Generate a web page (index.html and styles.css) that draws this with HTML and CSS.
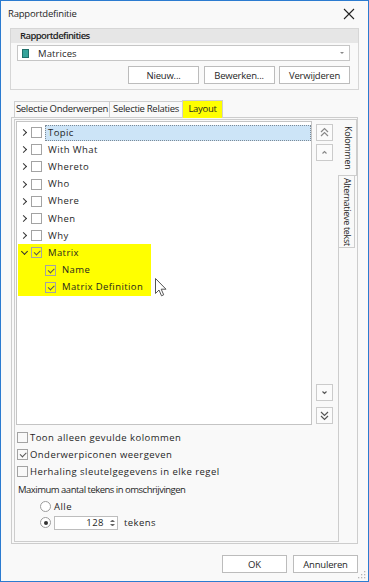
FILE: index.html
```html
<!DOCTYPE html>
<html lang="nl">
<head>
  <meta charset="UTF-8">
  <title>Rapportdefinitie</title>
  <link rel="stylesheet" href="styles.css">
</head>
<body>
  <div class="window">
    <!-- titelbalk -->
    <div class="titlebar">
      <span class="title">Rapportdefinitie</span>
      <svg class="close" width="12" height="12" viewBox="0 0 12 12">
        <path d="M1 1 L11 11 M11 1 L1 11" stroke="#222" stroke-width="1.1" fill="none"/>
      </svg>
    </div>

    <!-- rapportdefinities groep -->
    <div class="group">
      <div class="group-head">Rapportdefinities</div>
      <div class="group-body">
        <div class="combo">
          <span class="combo-icon"></span>
          <span class="combo-text">Matrices</span>
          <span class="combo-arrow"></span>
        </div>
        <div class="group-buttons">
          <button class="btn">Nieuw...</button>
          <button class="btn">Bewerken...</button>
          <button class="btn">Verwijderen</button>
        </div>
      </div>
    </div>

    <!-- tabbladen -->
    <div class="tabs">
      <div class="tab tab-1">Selectie Onderwerpen</div>
      <div class="tab tab-2">Selectie Relaties</div>
      <div class="tab tab-3 active">Layout</div>
    </div>

    <div class="page">
      <div class="pane">
        <div class="pane-top">
          <div class="tree">
            <div class="row sel"><span class="chev"></span><span class="cb"></span><span class="label">Topic</span></div>
            <div class="row"><span class="chev"></span><span class="cb"></span><span class="label">With What</span></div>
            <div class="row"><span class="chev"></span><span class="cb"></span><span class="label">Whereto</span></div>
            <div class="row"><span class="chev"></span><span class="cb"></span><span class="label">Who</span></div>
            <div class="row"><span class="chev"></span><span class="cb"></span><span class="label">Where</span></div>
            <div class="row"><span class="chev"></span><span class="cb"></span><span class="label">When</span></div>
            <div class="row"><span class="chev"></span><span class="cb"></span><span class="label">Why</span></div>
            <div class="hl">
              <div class="row"><span class="chev open"></span><span class="cb on"></span><span class="label">Matrix</span></div>
              <div class="row child"><span class="cb on"></span><span class="label">Name</span></div>
              <div class="row child"><span class="cb on"></span><span class="label">Matrix Definition</span></div>
            </div>
          </div>
          <div class="movers">
            <div class="mbtn">
              <svg width="11" height="11" viewBox="0 0 11 11"><path d="M2 5 L5.5 1.5 L9 5 M2 9 L5.5 5.5 L9 9" stroke="#888" stroke-width="1.2" fill="none"/></svg>
            </div>
            <div class="mbtn up">
              <svg width="11" height="11" viewBox="0 0 11 11"><path d="M3.5 6.5 L5.5 4.5 L7.5 6.5" stroke="#888" stroke-width="1.1" fill="none"/></svg>
            </div>
            <div class="spacer"></div>
            <div class="mbtn">
              <svg width="11" height="11" viewBox="0 0 11 11"><path d="M3.5 4.5 L5.5 6.5 L7.5 4.5" stroke="#555" stroke-width="1.1" fill="none"/></svg>
            </div>
            <div class="mbtn down">
              <svg width="11" height="11" viewBox="0 0 11 11"><path d="M2 2 L5.5 5.5 L9 2 M2 6 L5.5 9.5 L9 6" stroke="#555" stroke-width="1.2" fill="none"/></svg>
            </div>
          </div>
        </div>

        <!-- opties -->
        <div class="options">
          <div class="opt"><span class="cb"></span>Toon alleen gevulde kolommen</div>
          <div class="opt"><span class="cb on"></span>Onderwerpiconen weergeven</div>
          <div class="opt"><span class="cb"></span>Herhaling sleutelgegevens in elke regel</div>
          <div class="opt caption">Maximum aantal tekens in omschrijvingen</div>
          <div class="opt radio-row"><span class="radio"></span>Alle</div>
          <div class="opt radio-row second">
            <span class="radio on"></span>
            <span class="spin">128<span class="spin-arrows"><i class="up"></i><i class="down"></i></span></span>
            <span class="unit">tekens</span>
          </div>
        </div>
      </div>

      <div class="vtabs">
        <div class="vtab active">Kolommen</div>
        <div class="vtab">Alternatieve tekst</div>
      </div>
    </div>

    <div class="footer">
      <button class="btn">OK</button>
      <button class="btn">Annuleren</button>
    </div>

    <!-- muiscursor en sleepgreep -->
    <svg class="cursor" width="12" height="19" viewBox="0 0 12 19">
      <path d="M0.5 0.5 L0.5 15.5 L4 12 L6.5 17.8 L8.7 16.8 L6.2 11.2 L11 11.2 Z" fill="#fff" stroke="#555" stroke-width="1"/>
    </svg>
    <svg class="grip" width="8" height="8" viewBox="0 0 8 8">
      <g fill="#b5b5b5">
        <rect x="6" y="0" width="1.3" height="1.3"/>
        <rect x="3" y="3" width="1.3" height="1.3"/><rect x="6" y="3" width="1.3" height="1.3"/>
        <rect x="0" y="6" width="1.3" height="1.3"/><rect x="3" y="6" width="1.3" height="1.3"/><rect x="6" y="6" width="1.3" height="1.3"/>
      </g>
    </svg>
  </div>
</body>
</html>
```

FILE: styles.css
```css
/* basis */
* { box-sizing: border-box; margin: 0; padding: 0; }
body {
  font-family: 'Open Sans', 'Noto Sans', sans-serif;
  font-size: 9.5px;
  letter-spacing: -0.2px;
  color: #1f1f1f;
  background: #fff;
  white-space: nowrap;
}
.window {
  position: relative;
  width: 369px;
  height: 582px;
  border: 1px solid #2b7bd0;
  background: #f9f9f9;
  display: flex;
  flex-direction: column;
}
.titlebar {
  height: 27px;
  display: flex;
  align-items: center;
  justify-content: space-between;
  padding: 0 13px 2px 7px;
}

/* groep */
.group {
  margin: 0 9px;
  border: 1px solid #d6d6d6;
}
.group-head {
  height: 14px;
  line-height: 14px;
  padding-left: 9px;
  background: #e6e6e6;
  font-weight: 600;
  letter-spacing: -0.6px;
}
.group-body { padding: 2px 8px 5px 6px; }
.combo {
  height: 16px;
  border: 1px solid #c6c6c6;
  background: #fff;
  display: flex;
  align-items: center;
  padding: 0 5px 0 4px;
  letter-spacing: 0.1px;
}
.combo-icon {
  width: 7px;
  height: 9px;
  background: #35a39a;
  border: 1px solid #1f6f69;
  margin-right: 9px;
}
.combo-text { flex: 1; }
.combo-arrow {
  border-left: 2.5px solid transparent;
  border-right: 2.5px solid transparent;
  border-top: 2.5px solid #888;
}
.group-buttons {
  display: flex;
  justify-content: flex-end;
  gap: 4.5px;
  margin-top: 5px;
}
.btn {
  width: 71px;
  height: 18px;
  border: 1px solid #bcbcbc;
  background: #fff;
  font: inherit;
  color: inherit;
  letter-spacing: inherit;
}

/* tabbladen */
.tabs {
  display: flex;
  align-items: flex-start;
  height: 18px;
  margin: 10px 0 0 13px;
  position: relative;
  z-index: 1;
  letter-spacing: -0.3px;
}
.tab {
  height: 16px;
  margin-top: 1px;
  line-height: 14px;
  text-align: center;
  border: 1px solid #cfcfcf;
  border-bottom: none;
  background: #f9f9f9;
}
.tab + .tab { margin-left: -1px; }
.tab-1 { width: 96px; }
.tab-2 { width: 74px; }
.tab-3 { width: 41px; }
.tab.active {
  height: 18px;
  margin-top: 0;
  line-height: 16px;
  background: #ffff00;
}
.page {
  display: flex;
  height: 427px;
  margin: -1px 10px 0 10px;
  padding: 1px 0 0 2px;
  border: 1px solid #cdcdcd;
}
.pane {
  width: 325px;
  height: 423px;
  border: 1px solid #cdcdcd;
  padding: 1px 4px 0 1px;
}
.pane-top { display: flex; gap: 4px; }

/* boom */
.tree {
  width: 296px;
  height: 304px;
  background: #fff;
  border: 1px solid #c4c4c4;
  padding-top: 2px;
  letter-spacing: 0.4px;
}
.row {
  height: 17.2px;
  display: flex;
  align-items: center;
  padding-left: 4px;
}
.row.child { padding-left: 26px; }
.chev {
  position: relative;
  width: 8px;
  height: 8px;
}
.chev::before {
  content: '';
  position: absolute;
  left: 0;
  top: 1.5px;
  width: 4px;
  height: 4px;
  border-right: 1.3px solid #333;
  border-bottom: 1.3px solid #333;
  transform: rotate(-45deg);
}
.chev.open::before {
  left: 1px;
  top: 0;
  transform: rotate(45deg);
}
.cb {
  position: relative;
  width: 11px;
  height: 11px;
  border: 1px solid #a3a3a3;
  margin-left: 2px;
  flex-shrink: 0;
}
.cb.on::after {
  content: '';
  position: absolute;
  left: 2px;
  top: 2px;
  width: 5px;
  height: 2.5px;
  border-left: 1px solid #555;
  border-bottom: 1px solid #555;
  transform: rotate(-45deg);
}
.label {
  flex: 1;
  height: 16px;
  line-height: 16px;
  margin-left: 3px;
  padding-left: 3px;
}
.sel .label {
  background: #cce4f7;
  border: 1px dotted #7d8a96;
  line-height: 14px;
  padding-left: 2px;
}
.hl {
  width: 133px;
  margin-left: 1px;
  background: #ffff00;
}
.hl .row { padding-left: 3px; }
.hl .row.child { padding-left: 25px; }

/* verplaatsknoppen */
.movers {
  display: flex;
  flex-direction: column;
  width: 17px;
  height: 304px;
  padding: 3px 0 1px;
}
.mbtn {
  width: 17px;
  height: 17px;
  border: 1px solid #cbcbcb;
  background: #fbfbfb;
  display: flex;
  align-items: center;
  justify-content: center;
}
.mbtn.up { margin-top: 3px; }
.mbtn.down { margin-top: 6px; }
.spacer { flex: 1; }

/* opties */
.options { padding: 4px 0 0 1px; letter-spacing: 0.45px; }
.opt {
  display: flex;
  align-items: center;
  height: 17px;
}
.opt .cb { margin: 0 2px 0 0; }
.caption { margin-top: 1px; padding-left: 1px; letter-spacing: -0.5px; }
.radio-row { padding-left: 23px; }
.radio-row.second { height: 15px; }
.radio {
  position: relative;
  width: 11px;
  height: 11px;
  border: 1px solid #9c9c9c;
  border-radius: 50%;
  background: #fff;
  margin-right: 3px;
}
.radio.on::after {
  content: '';
  position: absolute;
  left: 2.5px;
  top: 2.5px;
  width: 4px;
  height: 4px;
  border-radius: 50%;
  background: #333;
}
.spin {
  display: flex;
  align-items: center;
  justify-content: flex-end;
  width: 64px;
  height: 14px;
  border: 1px solid #bdbdbd;
  background: #fff;
  padding-right: 2px;
}
.spin-arrows {
  display: flex;
  flex-direction: column;
  gap: 2px;
  margin-left: 6px;
  width: 5px;
}
.spin-arrows i {
  border-left: 2px solid transparent;
  border-right: 2px solid transparent;
}
.spin-arrows .up { border-bottom: 2px solid #666; }
.spin-arrows .down { border-top: 2px solid #666; }
.unit { margin-left: 6px; }

/* verticale tabs */
.vtabs {
  display: flex;
  flex-direction: column;
  margin-left: -1px;
  font-size: 9px;
  letter-spacing: -0.3px;
}
.vtab {
  writing-mode: vertical-rl;
  text-align: center;
  line-height: 16px;
  border: 1px solid #cdcdcd;
  border-left: none;
}
.vtab.active {
  width: 19px;
  height: 57px;
  background: #f9f9f9;
}
.vtab + .vtab {
  width: 16px;
  height: 72px;
  margin-left: 1px;
  border-top: none;
  line-height: 14px;
}

/* onderkant */
.footer {
  display: flex;
  justify-content: flex-end;
  gap: 6px;
  padding: 11px 10px 0 0;
}
.footer .btn { width: 65px; }
.cursor {
  position: absolute;
  left: 154px;
  top: 277px;
}
.grip {
  position: absolute;
  right: 2px;
  bottom: 2px;
}
```
